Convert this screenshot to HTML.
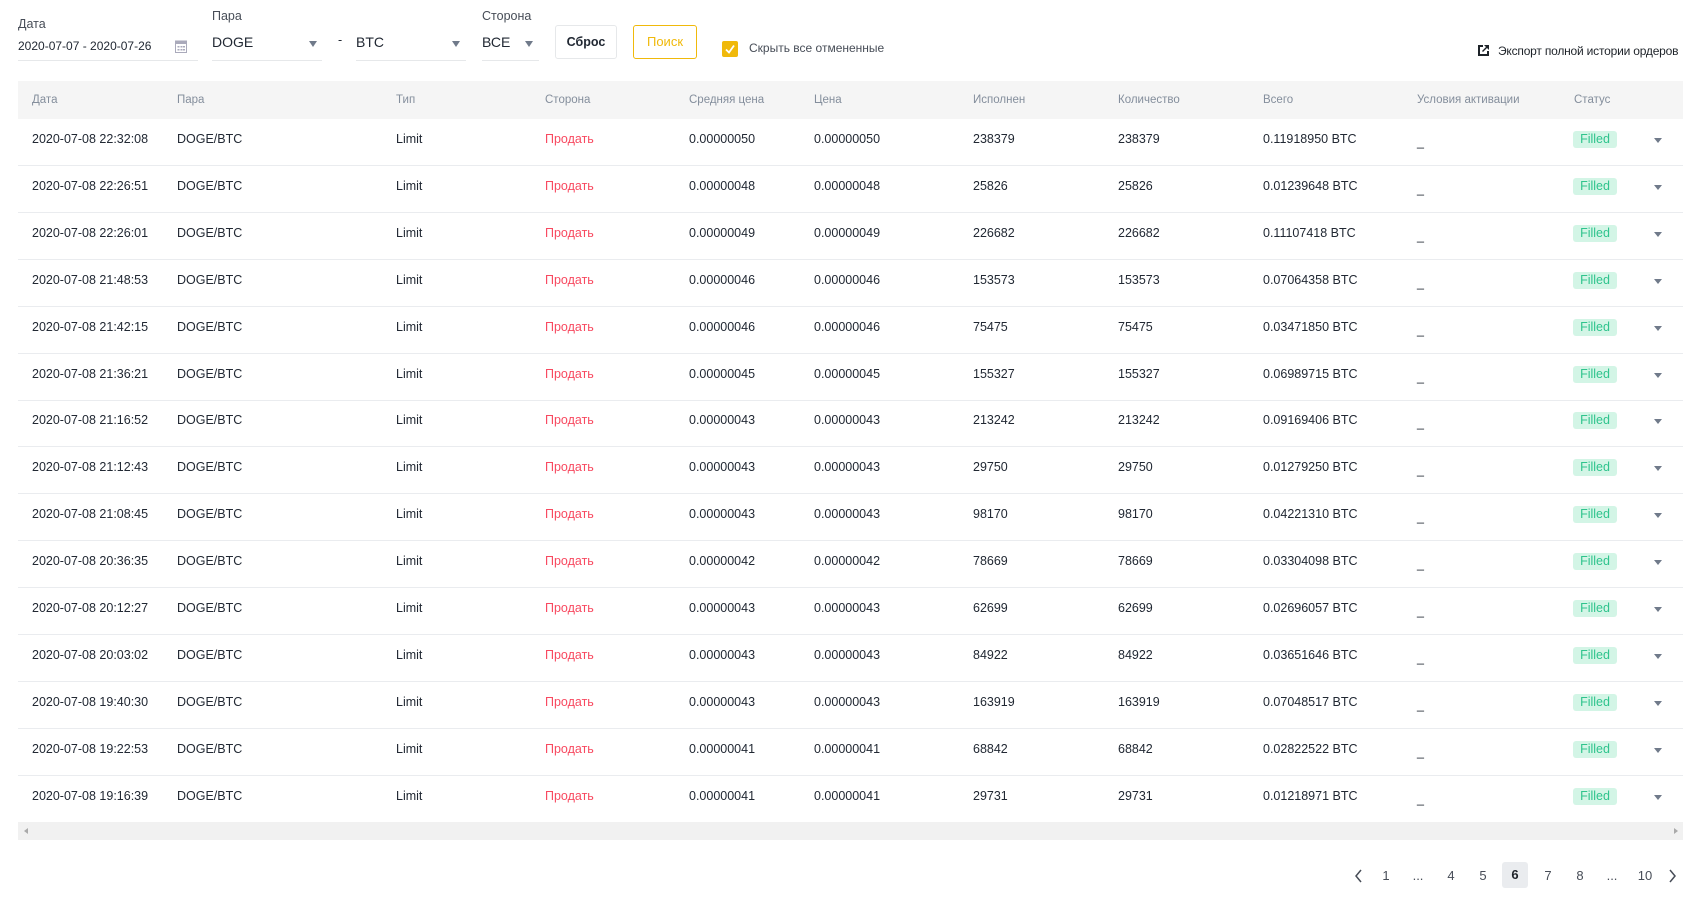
<!DOCTYPE html>
<html><head><meta charset="utf-8"><style>
*{box-sizing:border-box;margin:0;padding:0}
body{width:1690px;height:898px;background:#fff;font-family:"Liberation Sans",sans-serif;color:#212833;font-size:12.5px;position:relative;overflow:hidden}
.a{position:absolute;white-space:nowrap}
.lbl{color:#474d57;font-size:12.5px}
.ul{position:absolute;height:1px;background:#e6e8ea}
.tri{position:absolute;width:0;height:0;border-left:4px solid transparent;border-right:4px solid transparent;border-top:6px solid #707a8a}
.btn{position:absolute;border:1px solid #e6e8ea;border-radius:3px;text-align:center;line-height:32px;font-size:13px}
.hdr{position:absolute;left:18px;top:81px;width:1665px;height:38px;background:#f5f5f5}
.h{position:absolute;top:94px;color:#848e9c;font-size:11.5px}
.row{position:absolute;left:18px;width:1665px;height:47px;border-bottom:1px solid #eaecef}
.row span{position:absolute;top:13px;white-space:nowrap}
.red{color:#f84960}
.badge{background:#d3f5e6;color:#2fc48d;border-radius:3px;width:44px;height:17px;line-height:17px;text-align:center;top:12px!important;font-size:12.5px}
.pg{position:absolute;top:866px;font-size:13px;color:#474d57;width:26px;text-align:center;line-height:20px}
</style></head><body>
<div class="a lbl" style="left:18px;top:17px">Дата</div>
<div class="a" style="left:18px;top:39px;font-size:12px">2020-07-07 - 2020-07-26</div>
<svg class="a" style="left:175px;top:39px" width="12" height="14" viewBox="0 0 12 14"><rect x="0.5" y="2" width="11" height="11.5" fill="none" stroke="#aab" /><rect x="0.5" y="2" width="11" height="3" fill="#aab"/><g fill="#aab"><rect x="2.5" y="7" width="2" height="1.5"/><rect x="5.5" y="7" width="2" height="1.5"/><rect x="8" y="7" width="2" height="1.5"/><rect x="2.5" y="10" width="2" height="1.5"/><rect x="5.5" y="10" width="2" height="1.5"/><rect x="8" y="10" width="2" height="1.5"/></g></svg>
<div class="ul" style="left:18px;top:60px;width:180px"></div>
<div class="a lbl" style="left:212px;top:9px">Пара</div>
<div class="a" style="left:212px;top:34px;font-size:14px">DOGE</div>
<div class="tri" style="left:309px;top:41px"></div>
<div class="ul" style="left:212px;top:60px;width:110px"></div>
<div class="a" style="left:338px;top:33px">-</div>
<div class="a" style="left:356px;top:34px;font-size:14px">BTC</div>
<div class="tri" style="left:452px;top:41px"></div>
<div class="ul" style="left:356px;top:60px;width:110px"></div>
<div class="a lbl" style="left:482px;top:9px">Сторона</div>
<div class="a" style="left:482px;top:34px;font-size:14px">ВСЕ</div>
<div class="tri" style="left:525px;top:41px"></div>
<div class="ul" style="left:482px;top:60px;width:57px"></div>
<div class="btn" style="left:555px;top:25px;width:62px;height:34px;font-weight:bold;font-size:12.5px">Сброс</div>
<div class="btn" style="left:633px;top:25px;width:64px;height:34px;border-color:#f0b90b;color:#f0b90b">Поиск</div>
<svg class="a" style="left:722px;top:41px" width="16" height="16"><rect width="16" height="16" rx="2" fill="#f0b90b"/><path d="M4 8.5l3 3 5-7" stroke="#fff" stroke-width="1.8" fill="none"/></svg>
<div class="a" style="left:749px;top:41px;font-size:12px;color:#474d57">Скрыть все отмененные</div>
<svg class="a" style="left:1477px;top:44px" width="13" height="13" viewBox="0 0 13 13"><path d="M1 1h5v2H3v7h7V7h2v5H1z" fill="#1e2329"/><path d="M7 1h5v5l-2-2-4 4-1-1 4-4z" fill="#1e2329"/></svg>
<div class="a" style="left:1498px;top:44px;font-size:12px;color:#1e2329;letter-spacing:-0.2px">Экспорт полной истории ордеров</div>
<div class="hdr"></div>
<div class="h" style="left:32px">Дата</div><div class="h" style="left:177px">Пара</div><div class="h" style="left:396px">Тип</div><div class="h" style="left:545px">Сторона</div><div class="h" style="left:689px">Средняя цена</div><div class="h" style="left:814px">Цена</div><div class="h" style="left:973px">Исполнен</div><div class="h" style="left:1118px">Количество</div><div class="h" style="left:1263px">Всего</div><div class="h" style="left:1417px">Условия активации</div><div class="h" style="left:1574px">Статус</div>
<div id="rows"></div>
<div class="a" style="left:18px;top:822px;width:1665px;height:18px;background:#f1f1f1"></div>
<div class="a" style="left:24px;top:828px;width:0;height:0;border-top:3px solid transparent;border-bottom:3px solid transparent;border-right:4px solid #aaa"></div>
<div class="a" style="left:1674px;top:828px;width:0;height:0;border-top:3px solid transparent;border-bottom:3px solid transparent;border-left:4px solid #aaa"></div>
<svg class="a" style="left:1354px;top:869px" width="10" height="14"><path d="M7 1L2 7l5 6" stroke="#474d57" stroke-width="1.5" fill="none"/></svg>
<div class="pg" style="left:1373px">1</div><div class="pg" style="left:1405px">...</div><div class="pg" style="left:1438px">4</div><div class="pg" style="left:1470px">5</div>
<div class="pg" style="left:1502px;top:862px;height:26px;line-height:26px;background:#eaecef;border-radius:3px;font-weight:bold;color:#1e2329">6</div>
<div class="pg" style="left:1535px">7</div><div class="pg" style="left:1567px">8</div><div class="pg" style="left:1599px">...</div><div class="pg" style="left:1632px">10</div>
<svg class="a" style="left:1667px;top:869px" width="10" height="14"><path d="M3 1l5 6-5 6" stroke="#474d57" stroke-width="1.5" fill="none"/></svg>
<script>
var d=[["22:32:08","50","238379","0.11918950"],["22:26:51","48","25826","0.01239648"],["22:26:01","49","226682","0.11107418"],["21:48:53","46","153573","0.07064358"],["21:42:15","46","75475","0.03471850"],["21:36:21","45","155327","0.06989715"],["21:16:52","43","213242","0.09169406"],["21:12:43","43","29750","0.01279250"],["21:08:45","43","98170","0.04221310"],["20:36:35","42","78669","0.03304098"],["20:12:27","43","62699","0.02696057"],["20:03:02","43","84922","0.03651646"],["19:40:30","43","163919","0.07048517"],["19:22:53","41","68842","0.02822522"],["19:16:39","41","29731","0.01218971"]];
var h="";d.forEach(function(r,i){var t=119+i*46.9;var p="0.000000"+r[1];
h+='<div class="row" style="top:'+t+'px"><span style="left:14px">2020-07-08 '+r[0]+'</span><span style="left:159px">DOGE/BTC</span><span style="left:378px">Limit</span><span class="red" style="left:527px">Продать</span><span style="left:671px">'+p+'</span><span style="left:796px">'+p+'</span><span style="left:955px">'+r[2]+'</span><span style="left:1100px">'+r[2]+'</span><span style="left:1245px">'+r[3]+' BTC</span><span style="left:1399px;top:16px">_</span><span class="badge" style="left:1555px">Filled</span><span style="left:1636px;top:19px;width:0;height:0;border-left:4px solid transparent;border-right:4px solid transparent;border-top:5px solid #707a8a"></span></div>';});
document.getElementById("rows").innerHTML=h;
</script>
</body></html>
